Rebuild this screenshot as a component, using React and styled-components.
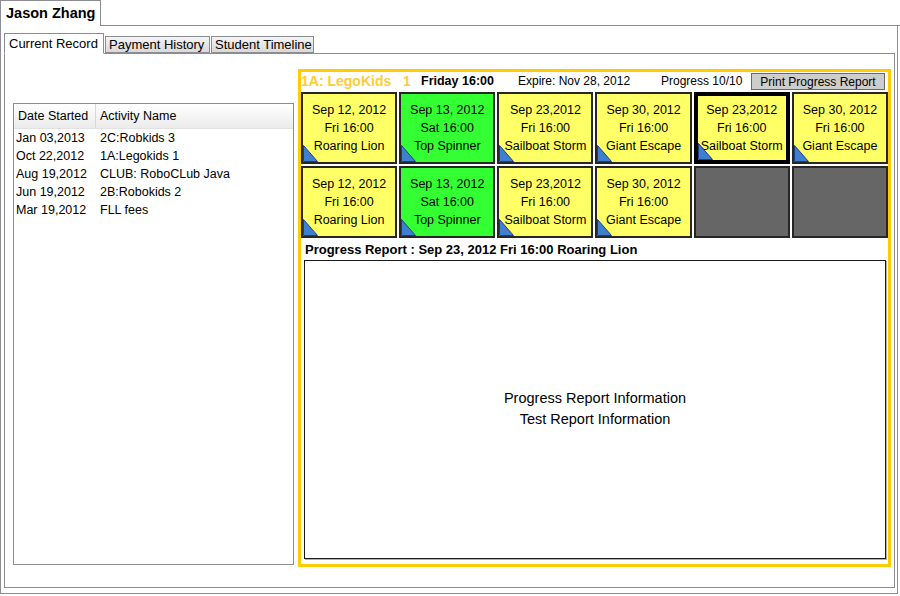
import React from "react";
import styled, { createGlobalStyle } from "styled-components";

const Global = createGlobalStyle`
  html, body { margin: 0; padding: 0; background: #fff; }
  body { font-family: "Liberation Sans", Arial, sans-serif; }
  * { box-sizing: border-box; }
`;

const GRAY = "#8c8c94";
const SKETCH = `"Comic Sans MS", "Liberation Sans", Arial, sans-serif`;

const Root = styled.div`
  width: 900px;
  height: 594px;
  display: flex;
  flex-direction: column;
`;

const TopBar = styled.div`
  display: flex;
  height: 26px;
  flex: none;
`;

const NameTab = styled.div`
  width: 101px;
  height: 26px;
  border: 1px solid ${GRAY};
  border-bottom: none;
  font-family: ${SKETCH};
  font-weight: bold;
  font-size: 14.5px;
  color: #000;
  padding: 4px 0 0 5px;
  white-space: nowrap;
`;

const TopFiller = styled.div`
  flex: 1;
  border-bottom: 1px solid ${GRAY};
`;

const OuterPanel = styled.div`
  flex: 1;
  width: 898px;
  border: 1px solid ${GRAY};
  border-top: none;
  padding: 7px 2px 5px 3px;
  display: flex;
  flex-direction: column;
`;

const TabStrip = styled.div`
  display: flex;
  align-items: flex-end;
  height: 20px;
  flex: none;
  position: relative;
  z-index: 1;
`;

const Tab = styled.div`
  width: ${(p) => p.$w}px;
  height: ${(p) => (p.$active ? "21px" : "17px")};
  padding-left: ${(p) => (p.$active ? "4px" : "3px")};
  margin-right: 1px;
  border: 1px solid ${GRAY};
  border-bottom: ${(p) => (p.$active ? "1px solid #fff" : `1px solid ${GRAY}`)};
  margin-bottom: ${(p) => (p.$active ? "-1px" : "0")};
  background: ${(p) => (p.$active ? "#fff" : "linear-gradient(#f4f4f4, #d9d9d9)")};
  font-size: 13px;
  color: #000;
  display: flex;
  align-items: center;
  white-space: nowrap;
`;

const InnerPanel = styled.div`
  flex: 1;
  width: 891px;
  border: 1px solid ${GRAY};
  padding: 15px 3px 0 8px;
  display: flex;
  align-items: flex-start;
  gap: 4px;
`;

const ListBox = styled.div`
  margin-top: 34px;
  width: 281px;
  height: 462px;
  border: 1px solid ${GRAY};
  flex: none;
`;

const ListHeader = styled.div`
  display: grid;
  grid-template-columns: 82px 1fr;
  height: 25px;
  background: linear-gradient(#ffffff, #ebebeb);
  border-bottom: 1px solid #e2e2e2;
`;

const HeaderCell = styled.div`
  display: flex;
  align-items: center;
  padding-left: 4px;
  font-size: 12.5px;
  color: #000;
  border-right: ${(p) => (p.$divider ? "1px solid #d8d8d8" : "none")};
`;

const ListRow = styled.div`
  display: grid;
  grid-template-columns: 84px 1fr;
  height: 18px;
  align-items: center;
  font-size: 12.5px;
  color: #000;
  padding-left: 2px;
`;

const YellowPanel = styled.div`
  width: 593px;
  height: 498px;
  border: 3px solid #ffcc00;
  display: flex;
  flex-direction: column;
  flex: none;
`;

const HeaderRow = styled.div`
  display: grid;
  grid-template-columns: 120px 97px 143px 90px 134px;
  height: 18px;
  align-items: center;
  margin-bottom: 2px;
  font-family: ${SKETCH};
  white-space: nowrap;
`;

const ClassLabel = styled.span`
  color: #ffcc33;
  font-weight: bold;
  font-size: 14px;
  white-space: pre;
`;

const HeadText = styled.span`
  font-size: ${(p) => (p.$bold ? "12.5px" : "12px")};
  font-weight: ${(p) => (p.$bold ? "bold" : "normal")};
  color: #000;
`;

const PrintButton = styled.div`
  height: 17px;
  margin-top: 1px;
  border: 1px solid #6a6a6a;
  background: #cdcdcd;
  font-size: 12px;
  color: #000;
  display: flex;
  align-items: center;
  justify-content: center;
`;

const CardGrid = styled.div`
  display: grid;
  grid-template-columns: repeat(6, 1fr);
  grid-auto-rows: 72px;
  gap: 2px;
`;

const Card = styled.div`
  position: relative;
  background: ${(p) => p.$bg};
  border: ${(p) => (p.$selected ? "4px solid #000" : "2px solid #262626")};
  display: flex;
  flex-direction: column;
  align-items: center;
  justify-content: center;
  font-family: ${SKETCH};
  font-size: 12.5px;
  line-height: 18px;
  color: #000;
  white-space: nowrap;
  overflow: hidden;
`;

const Corner = styled.svg`
  position: absolute;
  left: 0;
  bottom: 0;
`;

const ReportTitle = styled.div`
  margin-top: 2px;
  height: 18px;
  padding-left: 4px;
  display: flex;
  align-items: center;
  font-family: ${SKETCH};
  font-weight: bold;
  font-size: 13px;
  color: #000;
  white-space: pre;
`;

const ReportBox = styled.div`
  flex: 1;
  margin: 2px 2px 5px 3px;
  border: 1px solid #1a1a1a;
  box-shadow: 1px 1px 0 #b0b0b0;
  display: flex;
  flex-direction: column;
  align-items: center;
  justify-content: center;
  padding-bottom: 2px;
  font-family: ${SKETCH};
  font-size: 14.5px;
  line-height: 21px;
  color: #000;
`;

const rows = [
  ["Jan 03,2013", "2C:Robkids 3"],
  ["Oct 22,2012", "1A:Legokids 1"],
  ["Aug 19,2012", "CLUB: RoboCLub Java"],
  ["Jun 19,2012", "2B:Robokids 2"],
  ["Mar 19,2012", "FLL fees"],
];

const Y = "#ffff66";
const G = "#33ff33";
const D = "#666666";

const cards = [
  { d: "Sep 12, 2012", t: "Fri 16:00", n: "Roaring Lion", bg: Y },
  { d: "Sep 13, 2012", t: "Sat 16:00", n: "Top Spinner", bg: G },
  { d: "Sep 23,2012", t: "Fri 16:00", n: "Sailboat Storm", bg: Y },
  { d: "Sep 30, 2012", t: "Fri 16:00", n: "Giant Escape", bg: Y },
  { d: "Sep 23,2012", t: "Fri 16:00", n: "Sailboat Storm", bg: Y, sel: true },
  { d: "Sep 30, 2012", t: "Fri 16:00", n: "Giant Escape", bg: Y },
  { d: "Sep 12, 2012", t: "Fri 16:00", n: "Roaring Lion", bg: Y },
  { d: "Sep 13, 2012", t: "Sat 16:00", n: "Top Spinner", bg: G },
  { d: "Sep 23,2012", t: "Fri 16:00", n: "Sailboat Storm", bg: Y },
  { d: "Sep 30, 2012", t: "Fri 16:00", n: "Giant Escape", bg: Y },
  { empty: true },
  { empty: true },
];

function CornerMark() {
  return (
    <Corner width="15" height="17" viewBox="0 0 15 17">
      <polygon points="0.5,0.5 14.5,16.5 0.5,16.5" fill="#3f7fd0" stroke="#1d3c8c" strokeWidth="1" />
    </Corner>
  );
}

export default function App() {
  return (
    <>
      <Global />
      <Root>
        <TopBar>
          <NameTab>Jason Zhang</NameTab>
          <TopFiller />
        </TopBar>
        <OuterPanel>
          <TabStrip>
            <Tab $active $w={100}>Current Record</Tab>
            <Tab $w={105}>Payment History</Tab>
            <Tab $w={103}>Student Timeline</Tab>
          </TabStrip>
          <InnerPanel>
            <ListBox>
              <ListHeader>
                <HeaderCell $divider>Date Started</HeaderCell>
                <HeaderCell>Activity Name</HeaderCell>
              </ListHeader>
              {rows.map(([d, a]) => (
                <ListRow key={d}>
                  <span>{d}</span>
                  <span>{a}</span>
                </ListRow>
              ))}
            </ListBox>
            <YellowPanel>
              <HeaderRow>
                <ClassLabel>{"1A: LegoKids   1"}</ClassLabel>
                <HeadText $bold>Friday 16:00</HeadText>
                <HeadText>Expire: Nov 28, 2012</HeadText>
                <HeadText>Progress 10/10</HeadText>
                <PrintButton>Print Progress Report</PrintButton>
              </HeaderRow>
              <CardGrid>
                {cards.map((c, i) =>
                  c.empty ? (
                    <Card key={i} $bg={D} />
                  ) : (
                    <Card key={i} $bg={c.bg} $selected={c.sel}>
                      <span>{c.d}</span>
                      <span>{c.t}</span>
                      <span>{c.n}</span>
                      <CornerMark />
                    </Card>
                  )
                )}
              </CardGrid>
              <ReportTitle>{"Progress Report : Sep 23, 2012 Fri 16:00 Roaring Lion"}</ReportTitle>
              <ReportBox>
                <span>Progress Report Information</span>
                <span>Test Report Information</span>
              </ReportBox>
            </YellowPanel>
          </InnerPanel>
        </OuterPanel>
      </Root>
    </>
  );
}
